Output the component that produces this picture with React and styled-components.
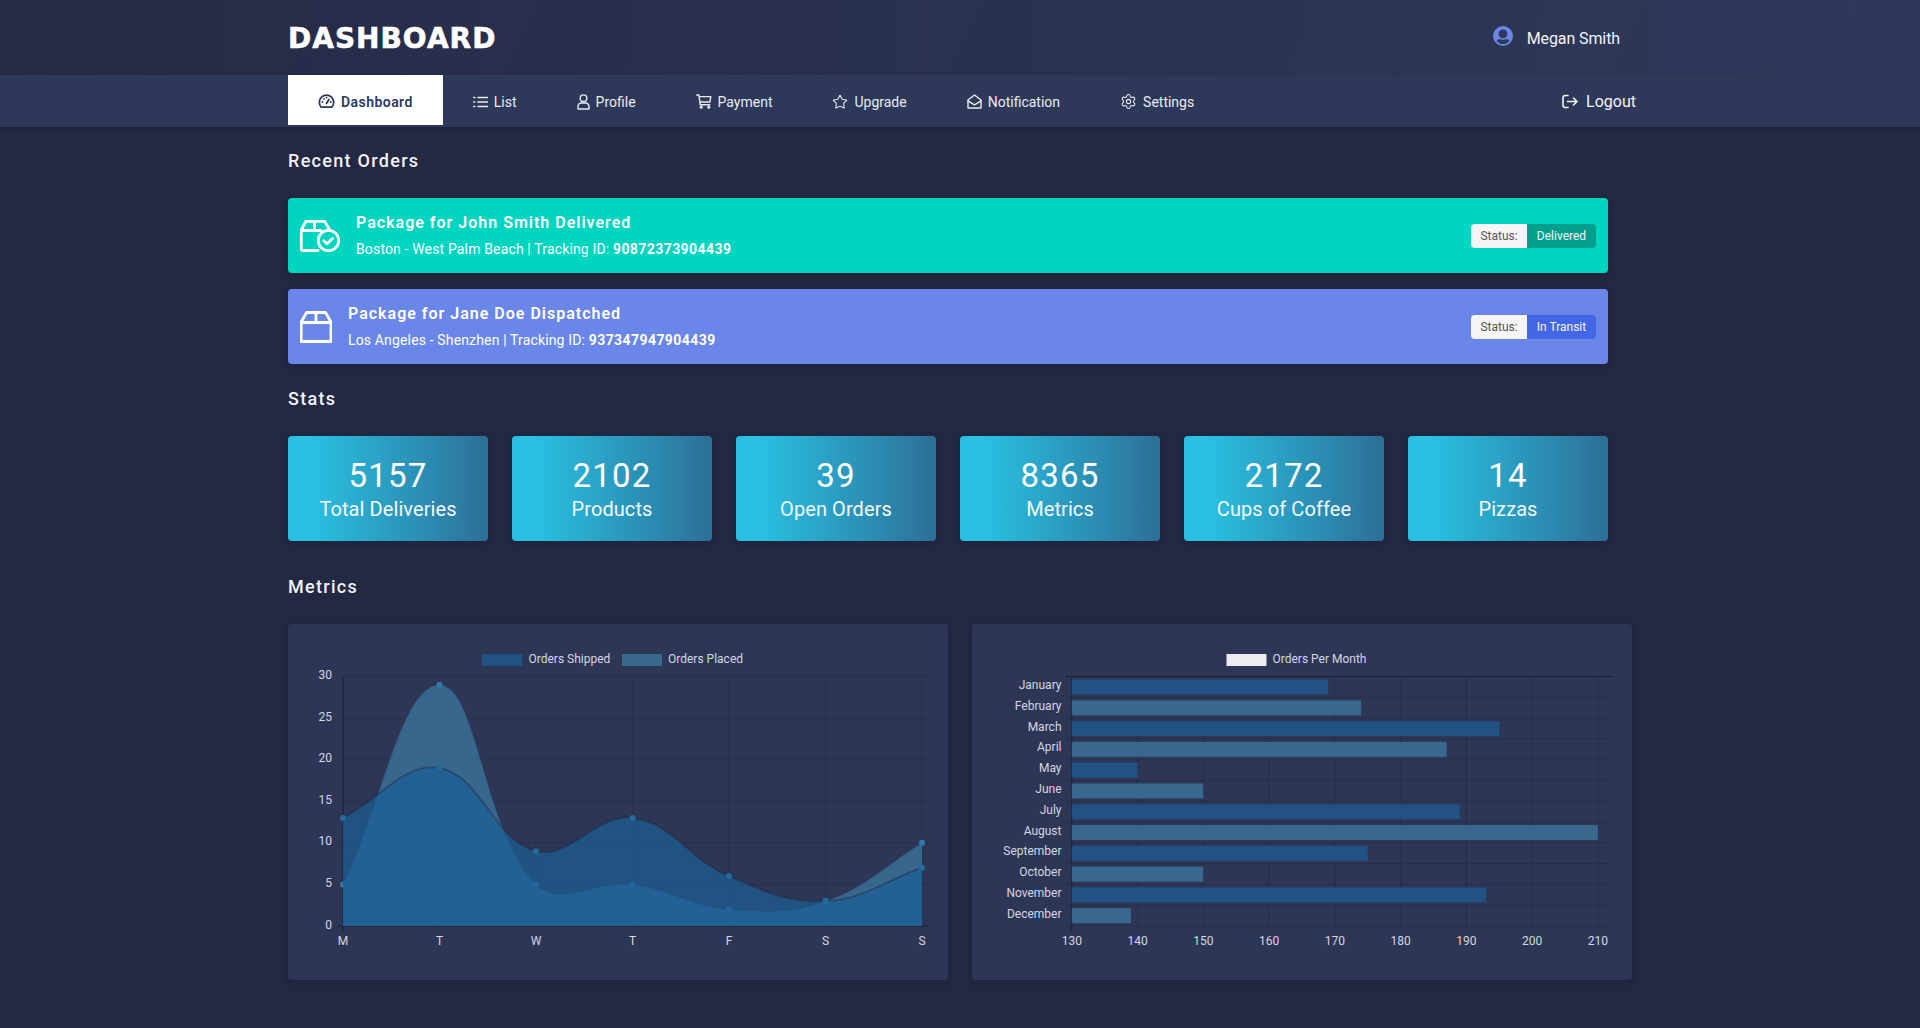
import React from 'react';
import styled, { createGlobalStyle } from 'styled-components';
import { Star, Settings } from 'lucide-react';

const FONT = 'Roboto, "Noto Sans", sans-serif';

const GlobalStyle = createGlobalStyle`
	html, body {
		margin: 0;
		padding: 0;
		background: #232843;
		font-family: ${FONT};
		color: #fff;
	}
`;

const Page = styled.div`
	min-height: 1028px;
	background: #232843;
`;

const Header = styled.header`
	height: 75px;
	background:
		repeating-linear-gradient(115deg, rgba(255, 255, 255, 0.005) 0 90px, transparent 90px 200px),
		linear-gradient(90deg, #252a46 0%, #2f3859 100%);
`;

const HeaderInner = styled.div`
	width: 1344px;
	height: 100%;
	margin: 0 auto;
	padding-right: 12px;
	box-sizing: border-box;
	display: flex;
	align-items: center;
	justify-content: space-between;
`;

const Logo = styled.div`
	padding-top: 3px;
	font-family: "DejaVu Sans", sans-serif;
	font-size: 28px;
	font-weight: 700;
	letter-spacing: 1px;
	line-height: 1;
	-webkit-text-stroke: 0.6px #fff;
`;

const User = styled.div`
	padding-top: 2px;
	display: flex;
	align-items: center;
	gap: 14px;
	font-size: 16px;
	letter-spacing: -0.1px;
	color: #f2f3f8;

	svg {
		margin-bottom: 5px;
	}
`;

const Nav = styled.nav`
	height: 52px;
	background: #2e3858;
	box-shadow: 0 1px 3px rgba(20, 24, 45, 0.35);
`;

const NavInner = styled.div`
	width: 1348px;
	height: 100%;
	margin-left: 288px;
	display: flex;
	align-items: flex-start;
`;

const NavItem = styled.a`
	height: 50px;
	padding: 3px 30px 0;
	box-sizing: border-box;
	display: flex;
	align-items: center;
	gap: 6px;
	font-size: 14px;
	letter-spacing: ${(props) => (props.$active ? '0.45px' : '0')};
	color: ${(props) => (props.$active ? '#2e3858' : '#e9ebf3')};
	background: ${(props) => (props.$active ? '#fff' : 'transparent')};
	font-weight: ${(props) => (props.$active ? 600 : 400)};
`;

const NavLogout = styled.a`
	margin-left: auto;
	height: 50px;
	padding-top: 2px;
	box-sizing: border-box;
	display: flex;
	align-items: center;
	gap: 8px;
	font-size: 16px;
	letter-spacing: 0;
	color: #f2f3f8;
`;

const Main = styled.main`
	width: 1344px;
	margin: 0 auto;
	padding-top: 23px;
`;

const SectionTitle = styled.h2`
	margin: ${(props) => props.$top || 0}px 0 26px;
	font-size: 18px;
	line-height: 22px;
	font-weight: 500;
	letter-spacing: 1.3px;
	color: #f2f3f8;
`;

const OrderList = styled.div`
	width: 1320px;
	display: flex;
	flex-direction: column;
	gap: 16px;
`;

const OrderCard = styled.div`
	height: 75px;
	padding: 0 12px;
	box-sizing: border-box;
	display: flex;
	align-items: center;
	gap: 16px;
	border-radius: 4px;
	background: ${(props) => props.$bg};
	box-shadow: 0 2px 6px rgba(20, 24, 45, 0.3);
`;

const OrderText = styled.div`
	flex: 1;
	display: flex;
	flex-direction: column;
	gap: 8px;
`;

const OrderTitle = styled.div`
	font-size: 16px;
	line-height: 18px;
	font-weight: 600;
	letter-spacing: 1px;
`;

const OrderDetail = styled.div`
	font-size: 14px;
	line-height: 18px;
	letter-spacing: 0.15px;

	b {
		font-weight: 700;
		letter-spacing: 0.43px;
	}
`;

const Badge = styled.div`
	height: 24px;
	display: flex;
	font-size: 12px;
	line-height: 24px;
	border-radius: 4px;
	overflow: hidden;
`;

const BadgeLabel = styled.span`
	width: 56px;
	text-align: center;
	background: #f5f5f5;
	color: #555;
`;

const BadgeValue = styled.span`
	width: 69px;
	text-align: center;
	background: ${(props) => props.$bg};
	color: #f4f6fb;
`;

const StatRow = styled.div`
	width: 1320px;
	display: grid;
	grid-template-columns: repeat(6, 200px);
	gap: 24px;
`;

const StatCard = styled.div`
	height: 105px;
	padding-top: 21px;
	box-sizing: border-box;
	text-align: center;
	border-radius: 4px;
	background: linear-gradient(90deg, #29c0e2 12%, #2d6f97 100%);
	box-shadow: 0 2px 6px rgba(20, 24, 45, 0.3);
`;

const StatValue = styled.div`
	font-size: 33px;
	line-height: 37px;
	letter-spacing: 1.2px;
`;

const StatLabel = styled.div`
	font-size: 20px;
	line-height: 30px;
	letter-spacing: 0.08px;
	color: #f4f8fb;
`;

const ChartRow = styled.div`
	display: grid;
	grid-template-columns: repeat(2, 660px);
	gap: 24px;
	padding-bottom: 48px;
`;

const ChartPanel = styled.div`
	height: 356px;
	border-radius: 4px;
	background: #2e3656;
	box-shadow: 0 2px 6px rgba(20, 24, 45, 0.3);
`;

const ChartSvg = styled.svg`
	display: block;
`;

const ChartText = styled.text`
	font-family: ${FONT};
	font-size: 12px;
	fill: #d3d6e3;
`;

const GRID = 'rgba(20, 24, 45, 0.22)';
const AXIS = 'rgba(20, 24, 45, 0.75)';
const SHIPPED = 'rgba(27, 94, 150, 0.7)';
const PLACED = 'rgba(63, 137, 179, 0.6)';
const SHIPPED_SOLID = '#215283';
const PLACED_SOLID = '#38688e';

const DAYS = ['M', 'T', 'W', 'T', 'F', 'S', 'S'];
const shipped = [13, 19, 9, 13, 6, 3, 7];
const placed = [5, 29, 5, 5, 2, 3, 10];

const LINE_X = 55;
const LINE_STEP = 96.5;
const PLOT_TOP = 52.5;
const PLOT_BOTTOM = 302;

const lineY = (value) => PLOT_BOTTOM - (value / 30) * (PLOT_BOTTOM - PLOT_TOP);

// same spline as chart.js: tension 0.4, control points capped to the plot
const splinePath = (values) => {
	const pts = values.map((v, i) => ({ x: LINE_X + i * LINE_STEP, y: lineY(v) }));
	const ctrl = pts.map((p, i) => {
		const prev = pts[i - 1] || p;
		const next = pts[i + 1] || p;
		const d1 = Math.hypot(p.x - prev.x, p.y - prev.y);
		const d2 = Math.hypot(next.x - p.x, next.y - p.y);
		const total = d1 + d2 || 1;
		const fa = (0.4 * d1) / total;
		const fb = (0.4 * d2) / total;
		return {
			px: p.x - fa * (next.x - prev.x),
			py: p.y - fa * (next.y - prev.y),
			nx: p.x + fb * (next.x - prev.x),
			ny: p.y + fb * (next.y - prev.y),
		};
	});
	const cap = (y) => Math.min(PLOT_BOTTOM, Math.max(PLOT_TOP, y));
	let d = `M${pts[0].x} ${pts[0].y}`;
	for (let i = 1; i < pts.length; i++) {
		d += ` C${ctrl[i - 1].nx} ${cap(ctrl[i - 1].ny)} ${ctrl[i].px} ${cap(ctrl[i].py)} ${pts[i].x} ${pts[i].y}`;
	}
	return d;
};

const Series = ({ values, fill, stroke, dot }) => {
	const line = splinePath(values);
	const lastX = LINE_X + (values.length - 1) * LINE_STEP;
	return (
		<g>
			<path d={`${line} L${lastX} ${PLOT_BOTTOM} L${LINE_X} ${PLOT_BOTTOM} Z`} fill={fill} />
			<path d={line} fill="none" stroke={stroke} strokeWidth="2" />
			{values.map((v, i) => (
				<circle key={i} cx={LINE_X + i * LINE_STEP} cy={lineY(v)} r="3" fill={dot} />
			))}
		</g>
	);
};

const LineChart = () => (
	<ChartSvg width="660" height="356">
		<rect x="194" y="30" width="40" height="12" fill={SHIPPED_SOLID} />
		<ChartText x="240.5" y="39">Orders Shipped</ChartText>
		<rect x="334" y="30" width="40" height="12" fill={PLACED_SOLID} />
		<ChartText x="380" y="39">Orders Placed</ChartText>

		{[0, 5, 10, 15, 20, 25, 30].map((v) => (
			<g key={v}>
				<line x1="50" x2="640" y1={lineY(v)} y2={lineY(v)} stroke={v === 0 ? AXIS : GRID} />
				<ChartText x="44" y={lineY(v) + 2.5} textAnchor="end">{v}</ChartText>
			</g>
		))}
		{DAYS.map((day, i) => (
			<g key={i}>
				<line
					x1={LINE_X + i * LINE_STEP}
					x2={LINE_X + i * LINE_STEP}
					y1={PLOT_TOP}
					y2={PLOT_BOTTOM + 5}
					stroke={i === 0 ? AXIS : GRID}
				/>
				<ChartText x={LINE_X + i * LINE_STEP} y="321" textAnchor="middle">{day}</ChartText>
			</g>
		))}

		<Series values={placed} fill={PLACED} stroke="rgba(35, 40, 67, 0.25)" dot="#2f7aa8" />
		<Series values={shipped} fill={SHIPPED} stroke="rgba(35, 40, 67, 0.42)" dot="#246a9b" />
	</ChartSvg>
);

const MONTHS = [
	['January', 169],
	['February', 174],
	['March', 195],
	['April', 187],
	['May', 140],
	['June', 150],
	['July', 189],
	['August', 210],
	['September', 175],
	['October', 150],
	['November', 193],
	['December', 139],
];

const BAR_X = 99.8;
const BAR_STEP = 65.76;
const ROW_H = (PLOT_BOTTOM - PLOT_TOP) / 12;

const BarChart = () => (
	<ChartSvg width="660" height="356">
		<rect x="254.5" y="30" width="40" height="12" fill="#edecf3" />
		<ChartText x="300.5" y="39">Orders Per Month</ChartText>

		{[130, 140, 150, 160, 170, 180, 190, 200, 210].map((tick, i) => (
			<g key={tick}>
				<line
					x1={BAR_X + i * BAR_STEP}
					x2={BAR_X + i * BAR_STEP}
					y1={PLOT_TOP}
					y2={PLOT_BOTTOM + 5}
					stroke={i === 0 ? AXIS : GRID}
				/>
				<ChartText x={BAR_X + i * BAR_STEP} y="321" textAnchor="middle">{tick}</ChartText>
			</g>
		))}
		{[...MONTHS, null].map((_, i) => (
			<line
				key={i}
				x1="94"
				x2="640"
				y1={PLOT_TOP + i * ROW_H}
				y2={PLOT_TOP + i * ROW_H}
				stroke={i === 0 ? AXIS : GRID}
			/>
		))}
		{MONTHS.map(([month, value], i) => (
			<g key={month}>
				<rect
					x={BAR_X}
					y={PLOT_TOP + i * ROW_H + 3}
					width={((value - 130) / 10) * BAR_STEP}
					height="15"
					fill={i % 2 ? PLACED_SOLID : SHIPPED_SOLID}
				/>
				<ChartText x="89.5" y={PLOT_TOP + i * ROW_H + 12.5} textAnchor="end">{month}</ChartText>
			</g>
		))}
	</ChartSvg>
);

const Line = styled.svg`
	display: block;
	flex: none;
	fill: none;
	stroke: currentColor;
	stroke-linecap: round;
	stroke-linejoin: round;
`;

const GaugeIcon = () => (
	<Line width="17" height="15" viewBox="0 0 17 15" strokeWidth="1.8">
		<path d="M3.2 13.2a7.2 7.2 0 1 1 10.6 0z" />
		<path d="M8.5 9.5l2.3-4M4.4 8h.1M6 4.8h.1M8.5 3.6h.1M12.6 8h.1" />
	</Line>
);

const ListIcon = () => (
	<Line width="15" height="14" viewBox="0 0 15 14" strokeWidth="1.6">
		<path d="M5 2.5h9.5M5 7h9.5M5 11.5h9.5M.8 2.5h1M.8 7h1M.8 11.5h1" />
	</Line>
);

const ProfileIcon = () => (
	<Line width="13" height="16" viewBox="0 0 13 16" strokeWidth="1.4">
		<circle cx="6.5" cy="4.2" r="3.3" />
		<path d="M1 15v-2.5A3.5 3.5 0 0 1 4.5 9h4a3.5 3.5 0 0 1 3.5 3.5V15z" />
	</Line>
);

const CartIcon = () => (
	<Line width="16" height="15" viewBox="0 0 16 15" strokeWidth="1.4">
		<path d="M.7 1h2.2l1.3 9.7h9.6M3.2 2.6h11.6l-.9 5.4H3.9" />
		<circle cx="5.2" cy="13.2" r="0.9" />
		<circle cx="12.8" cy="13.2" r="0.9" />
	</Line>
);

const MailOpenIcon = () => (
	<Line width="15" height="15" viewBox="0 0 15 15" strokeWidth="1.4">
		<path d="M1 6l6.5-5L14 6v8H1z" />
		<path d="M1 6.8l6.5 4 6.5-4" />
	</Line>
);

const LogoutIcon = () => (
	<Line width="17" height="17" viewBox="0 0 17 17" strokeWidth="1.6">
		<path d="M7 2.5H4.2A2.2 2.2 0 0 0 2 4.7v7.6a2.2 2.2 0 0 0 2.2 2.2H7" />
		<path d="M6.5 8.5H16M12.5 5L16 8.5 12.5 12" />
	</Line>
);

const DeliveredIcon = () => (
	<Line width="40" height="32" viewBox="0 0 40 32" strokeWidth="2.8">
		<path d="M18 30.5H2.5a1.5 1.5 0 0 1-1.3-1.5V10L6 1.3h18.5L29 8.5" />
		<path d="M1.2 10.5H21M14.5 1.3v9.2" />
		<circle cx="28.5" cy="20.5" r="10.2" />
		<path d="M23.8 20.8l3.2 3 5.6-5.4" />
	</Line>
);

const DispatchedIcon = () => (
	<Line width="32" height="32" viewBox="0 0 32 32" strokeWidth="2.8">
		<path d="M6.5 1.5h19L31 11v19.5H1.2V11z" />
		<path d="M1.2 11.5H31M16 1.5v10" />
	</Line>
);

const AvatarIcon = () => (
	<svg width="20" height="20" viewBox="0 0 20 20">
		<circle cx="10" cy="10" r="10" fill="#6b87e8" />
		<circle cx="10" cy="7.8" r="4.4" fill="#2e3858" />
		<path d="M3.6 14.8C5 12.6 7.5 13.2 10 14c2.5-.8 5-1.4 6.4.8A8 8 0 0 1 3.6 14.8z" fill="#2e3858" />
	</svg>
);

const navItems = [
	{ label: 'Dashboard', icon: <GaugeIcon />, active: true },
	{ label: 'List', icon: <ListIcon /> },
	{ label: 'Profile', icon: <ProfileIcon /> },
	{ label: 'Payment', icon: <CartIcon /> },
	{ label: 'Upgrade', icon: <Star size={16} strokeWidth={1.6} /> },
	{ label: 'Notification', icon: <MailOpenIcon /> },
	{ label: 'Settings', icon: <Settings size={17} strokeWidth={1.5} /> },
];

const stats = [
	[5157, 'Total Deliveries'],
	[2102, 'Products'],
	[39, 'Open Orders'],
	[8365, 'Metrics'],
	[2172, 'Cups of Coffee'],
	[14, 'Pizzas'],
];

const App = () => {
	return (
		<Page>
			<GlobalStyle />
			<Header>
				<HeaderInner>
					<Logo>DASHBOARD</Logo>
					<User>
						<AvatarIcon />
						Megan Smith
					</User>
				</HeaderInner>
			</Header>
			<Nav>
				<NavInner>
					{navItems.map((item) => (
						<NavItem key={item.label} $active={item.active}>
							{item.icon}
							{item.label}
						</NavItem>
					))}
					<NavLogout>
						<LogoutIcon />
						Logout
					</NavLogout>
				</NavInner>
			</Nav>
			<Main>
				<SectionTitle>Recent Orders</SectionTitle>
				<OrderList>
					<OrderCard $bg="#00d5c0">
						<DeliveredIcon />
						<OrderText>
							<OrderTitle>Package for John Smith Delivered</OrderTitle>
							<OrderDetail>
								Boston - West Palm Beach | Tracking ID: <b>90872373904439</b>
							</OrderDetail>
						</OrderText>
						<Badge>
							<BadgeLabel>Status:</BadgeLabel>
							<BadgeValue $bg="#00a08d">Delivered</BadgeValue>
						</Badge>
					</OrderCard>
					<OrderCard $bg="#6a86e8">
						<DispatchedIcon />
						<OrderText>
							<OrderTitle>Package for Jane Doe Dispatched</OrderTitle>
							<OrderDetail>
								Los Angeles - Shenzhen | Tracking ID: <b>937347947904439</b>
							</OrderDetail>
						</OrderText>
						<Badge>
							<BadgeLabel>Status:</BadgeLabel>
							<BadgeValue $bg="#4266e4">In Transit</BadgeValue>
						</Badge>
					</OrderCard>
				</OrderList>

				<SectionTitle $top={24}>Stats</SectionTitle>
				<StatRow>
					{stats.map(([value, label]) => (
						<StatCard key={label}>
							<StatValue>{value}</StatValue>
							<StatLabel>{label}</StatLabel>
						</StatCard>
					))}
				</StatRow>

				<SectionTitle $top={35}>Metrics</SectionTitle>
				<ChartRow>
					<ChartPanel>
						<LineChart />
					</ChartPanel>
					<ChartPanel>
						<BarChart />
					</ChartPanel>
				</ChartRow>
			</Main>
		</Page>
	);
};

export default App;
